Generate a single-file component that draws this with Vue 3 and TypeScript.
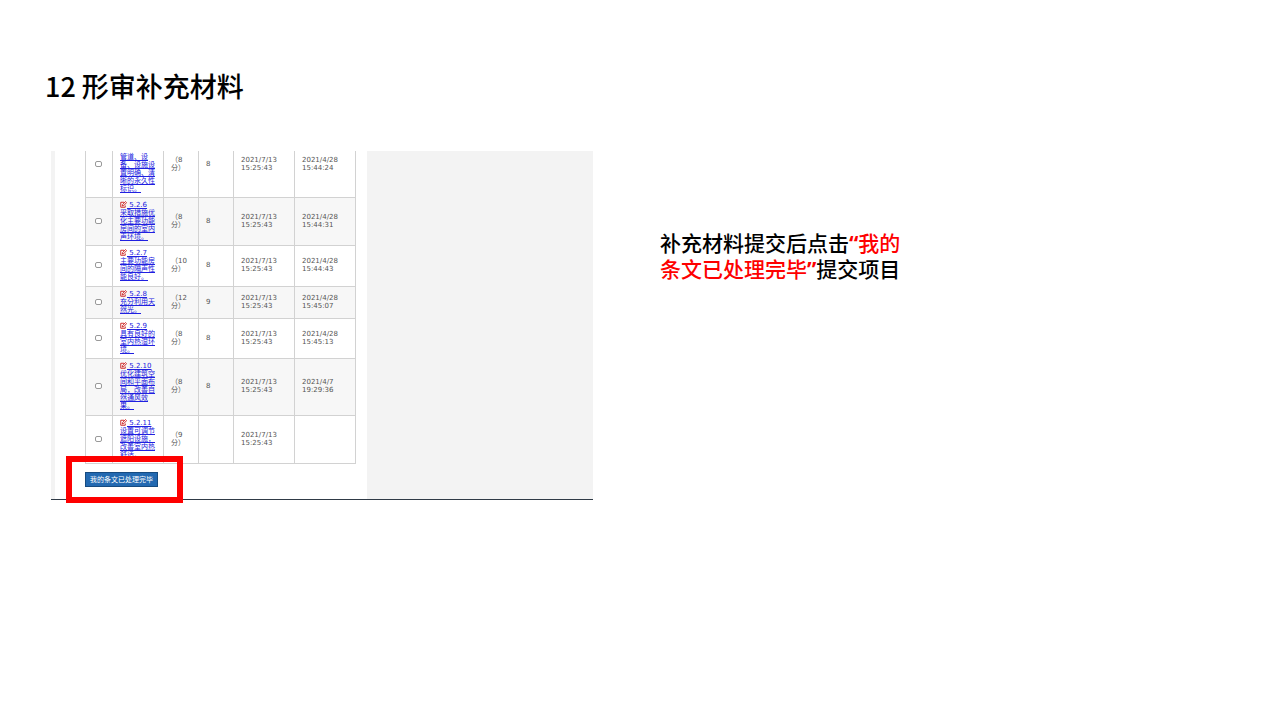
<script setup lang="ts">
interface Row {
  id: string
  code: string
  lines: string[]
  points: string
  score: string
  assigned: string[]
  handled: string[]
  tall?: boolean
}

const assigned = ['2021/7/13', '15:25:43']

const rows: Row[] = [
  { id: 'r5', code: '', lines: ['管道、设', '备、设施设', '置明确、清', '晰的永久性', '标识。'], points: '8', score: '8', assigned, handled: ['2021/4/28', '15:44:24'] },
  { id: 'r6', code: '5.2.6', lines: ['采取措施优', '化主要功能', '房间的室内', '声环境。'], points: '8', score: '8', assigned, handled: ['2021/4/28', '15:44:31'] },
  { id: 'r7', code: '5.2.7', lines: ['主要功能房', '间的隔声性', '能良好。'], points: '10', score: '8', assigned, handled: ['2021/4/28', '15:44:43'], tall: true },
  { id: 'r8', code: '5.2.8', lines: ['充分利用天', '然光。'], points: '12', score: '9', assigned, handled: ['2021/4/28', '15:45:07'] },
  { id: 'r9', code: '5.2.9', lines: ['具有良好的', '室内热湿环', '境。'], points: '8', score: '8', assigned, handled: ['2021/4/28', '15:45:13'] },
  { id: 'r10', code: '5.2.10', lines: ['优化建筑空', '间和平面布', '局，改善自', '然通风效', '果。'], points: '8', score: '8', assigned, handled: ['2021/4/7', '19:29:36'], tall: true },
  { id: 'r11', code: '5.2.11', lines: ['设置可调节', '遮阳设施，', '改善室内热', '舒适。'], points: '9', score: '', assigned, handled: [] },
]
</script>

<template>
  <main class="slide">
    <h1>12 形审补充材料</h1>
    <div class="content">
      <section class="shot">
        <div class="panel">
          <div class="window">
            <table>
              <colgroup>
                <col class="c-check"><col class="c-name"><col class="c-num"><col class="c-num"><col class="c-date"><col class="c-date">
              </colgroup>
              <tbody>
                <tr v-for="row in rows" :key="row.id" :class="{ tall: row.tall, cut: !row.code }">
                  <td class="check"><input type="checkbox" :aria-labelledby="row.id"></td>
                  <td class="name">
                    <a :id="row.id" href="#">
                      <span v-if="row.code" class="line"><svg class="edit" viewBox="0 0 14 14" aria-hidden="true"><path d="M8 2.5H1.5v10h9V9" /><path class="pen" d="M4.5 10l.8-3L11 1l2.2 2.2L7.5 9.2z" /></svg>&nbsp;{{ row.code }}</span>
                      <span v-for="line in row.lines" :key="line" class="line">{{ line }}</span>
                    </a>
                  </td>
                  <td><span class="line">（{{ row.points }}</span><span class="line">分）</span></td>
                  <td>{{ row.score }}</td>
                  <td><span v-for="part in row.assigned" :key="part" class="line">{{ part }}</span></td>
                  <td><span v-for="part in row.handled" :key="part" class="line">{{ part }}</span></td>
                </tr>
              </tbody>
            </table>
          </div>
          <div class="action">
            <button type="button">我的条文已处理完毕</button>
            <div class="highlight"></div>
          </div>
        </div>
      </section>
      <p class="note">补充材料提交后点击<em><b>“</b>我的<br>条文已处理完毕<b>”</b></em>提交项目</p>
    </div>
  </main>
</template>

<style>
body {
  margin: 0;
  background: #fff;
}
</style>

<style scoped>
.slide {
  box-sizing: border-box;
  min-height: 100vh;
  padding: 66px 0 40px 51px;
  color: #000;
  font-family: "Open Sans", "Noto Sans CJK SC", sans-serif;
}

h1 {
  margin: 0 0 45px -6px;
  font-family: "Noto Sans CJK SC", sans-serif;
  font-size: 27px;
  line-height: 40px;
  font-weight: 500;
}

.content {
  display: grid;
  grid-template-columns: 542fr 620fr;
  column-gap: 67px;
  align-items: start;
}

.shot {
  padding-left: 4px;
  background: #f3f3f3;
  border-bottom: 1px solid #2f3a46;
}

.panel {
  box-sizing: border-box;
  width: 312px;
  padding-left: 30px;
  background: #fff;
}

.window {
  overflow: hidden;
}

table {
  width: 271px;
  margin-top: -20px;
  table-layout: fixed;
  border-collapse: collapse;
  color: #555;
  font-family: "DejaVu Sans", "Noto Sans CJK SC", sans-serif;
  font-size: 7px;
  line-height: 8px;
}

.c-check { width: 27px; }
.c-name { width: 51px; }
.c-num { width: 35px; }
.c-date { width: 61px; }

td {
  padding: 3px 0 4px 7px;
  border: 1px solid #d2d2d2;
  white-space: nowrap;
}

tr:nth-child(even) { background: #f7f7f7; }
.tall td { padding-bottom: 5px; }
.cut { height: 66px; }
.cut .name { vertical-align: bottom; }

td.check {
  padding-left: 0;
  padding-right: 1px;
}

.check input {
  display: block;
  width: 7px;
  height: 6px;
  margin: 0 auto;
  appearance: none;
  background: #fff;
  border: 1px solid #999;
  border-radius: 2px;
}

.line {
  display: block;
  height: 8px;
}

a {
  color: #2020e0;
  text-decoration: underline;
}

.edit {
  width: 7px;
  height: 7px;
  vertical-align: -1px;
  fill: none;
  stroke: #d03030;
  stroke-width: 2;
}

.action {
  position: relative;
  padding: 8px 0 12px;
}

button {
  display: block;
  height: 15px;
  padding: 0 4px;
  background: #2369b1;
  border: 1px solid #174b80;
  color: #fff;
  font-family: "Noto Sans CJK SC", sans-serif;
  font-size: 7px;
  line-height: 13px;
}

.highlight {
  position: absolute;
  z-index: 1;
  top: -8px;
  bottom: -4px;
  left: -19px;
  box-sizing: border-box;
  width: 117px;
  border: 6px solid #fe0000;
}

.note {
  margin: 79px 0 0;
  font-size: 21px;
  line-height: 26px;
  font-weight: 500;
}

.note em {
  color: #fe0000;
  font-style: normal;
}
</style>
